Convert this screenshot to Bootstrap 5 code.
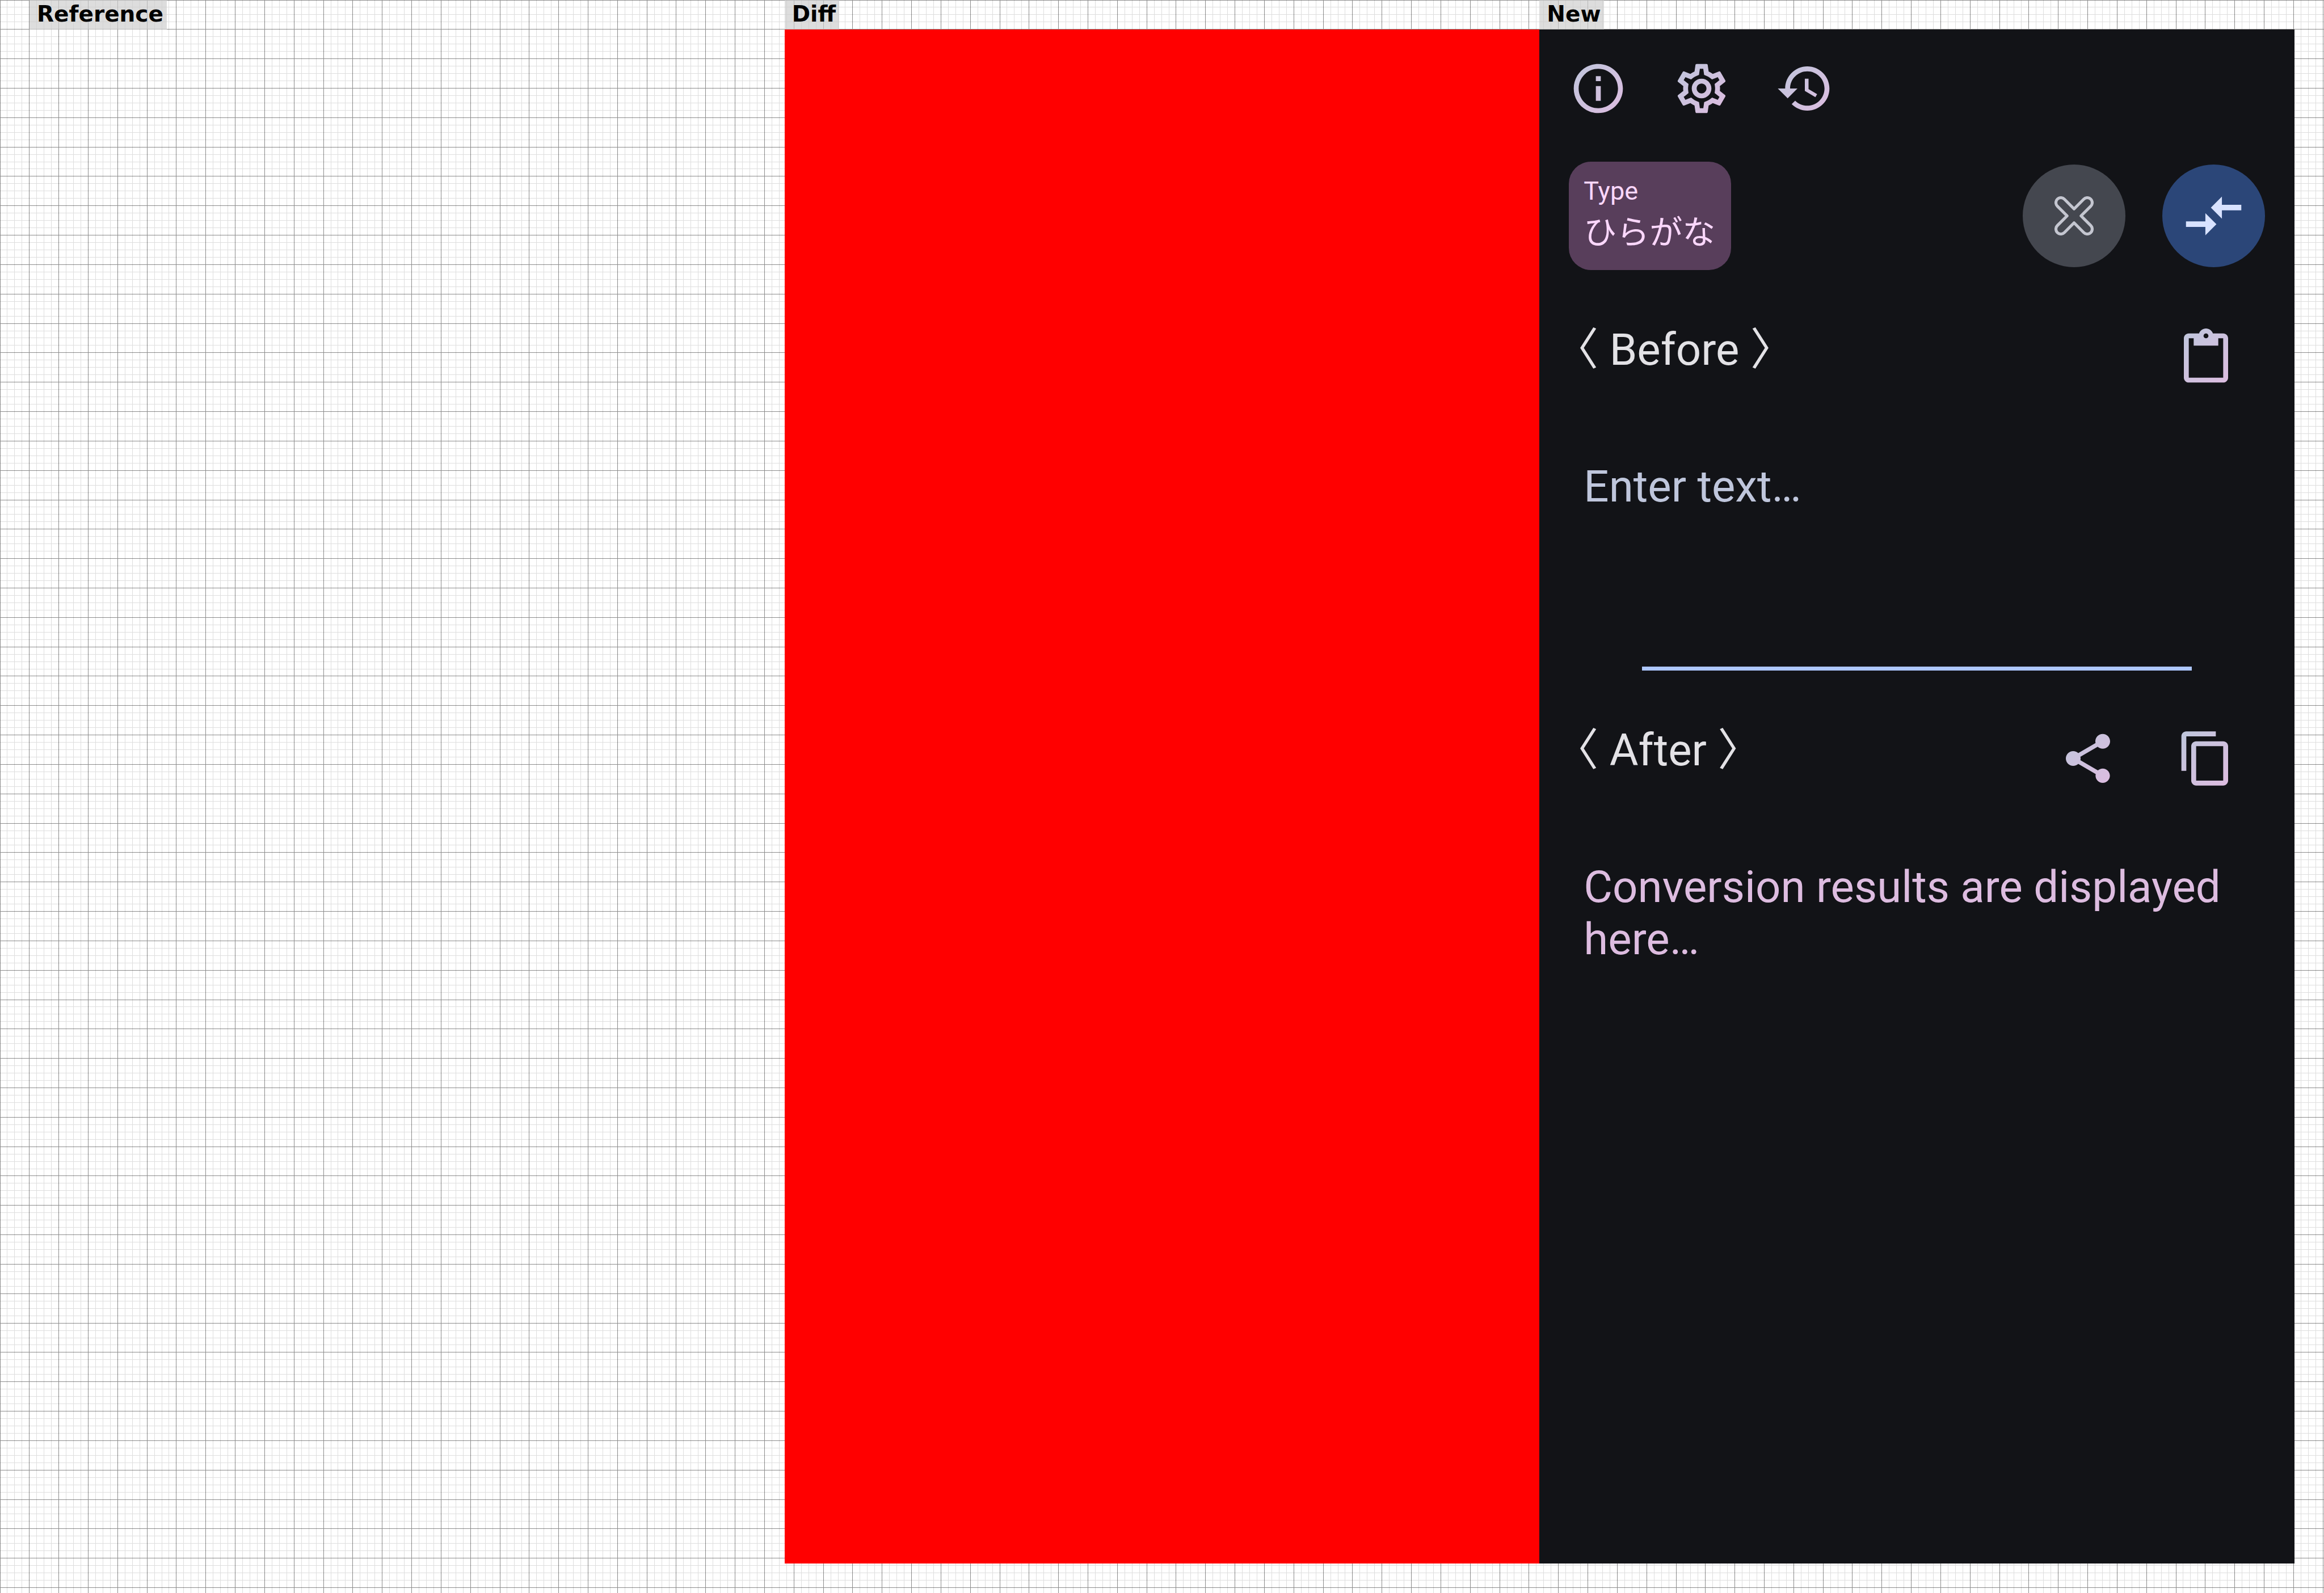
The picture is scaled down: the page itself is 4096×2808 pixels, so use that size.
<!DOCTYPE html>
<html lang="en">
<head>
<meta charset="utf-8">
<meta name="viewport" content="width=device-width, initial-scale=1">
<title>Snapshot comparison</title>
<link href="https://cdn.jsdelivr.net/npm/bootstrap@5.3.0/dist/css/bootstrap.min.css" rel="stylesheet">
<style>
  body { background: #fff; }
  .board-grid { position: absolute; inset: 0; width: 100%; height: 100%; }
  .grid-minor { stroke: rgba(0, 0, 0, .13); }
  .grid-major { stroke: rgba(0, 0, 0, .45); }
  .board { padding: 0 52px 52px; }
  .shot { flex: 1 1 0; min-width: 0; }
  .shot-label {
    background: rgba(204, 204, 204, .67); color: #000; height: 52px; padding: 0 6px 0 13px;
    font: 700 39px/50px "DejaVu Sans", sans-serif;
  }
  .diff-fill { background: #f00; }
  .app { background: #121317; color: #e3e2e6; font-family: Roboto, "Noto Sans CJK JP", sans-serif; }
  .app button { border: 0; padding: 0; background: none; display: block; }
  .toolbar-row { padding: 52px 52px 0; gap: 78px; }
  .glyph { width: 104px; height: 104px; display: block; }
  .type-row { padding: 77px 52px 0; }
  .app .type-btn {
    background: #583e5b; color: #fbd7fc; border-radius: 39px; padding: 26px;
    min-width: 286px; height: 191px; text-align: left; font-size: 45px; line-height: 52px;
  }
  .type-value { font-size: 58px; line-height: 86px; padding-top: 4px; }
  .app .round-btn { width: 181px; height: 181px; border-radius: 50%; }
  .round-gap { gap: 65px; }
  .app .clear-btn { background: #44474f; }
  .app .convert-btn { background: #2b4678; }
  .head-row { padding: 0 104px 0 26px; }
  .head-before { margin-top: 95px; }
  .head-after { margin-top: 95px; }
  .head-title { font-size: 78px; line-height: 92px; font-weight: 400; margin: 0; }
  .head-icons { padding-top: 8px; gap: 104px; }
  .text-pad { padding: 129px 78px 0; }
  .entry {
    display: block; width: 100%; height: 363px; border: 0; outline: 0; padding: 0; resize: none;
    background: transparent; color: #bfc6dc; font-size: 78px; line-height: 92px;
  }
  .entry::placeholder { color: #bfc6dc; opacity: 1; }
  .rule { height: 7px; margin: 0 181px; background: #adc6ff; }
  .result { font-size: 78px; line-height: 92px; color: #ddbce0; margin: 0; }
</style>
<script src="https://cdn.jsdelivr.net/npm/bootstrap@5.3.0/dist/js/bootstrap.bundle.min.js"></script>
</head>
<body>
<svg class="board-grid" aria-hidden="true" shape-rendering="crispEdges">
  <path class="grid-minor" id="minor" fill="none"/>
  <path class="grid-major" id="major" fill="none"/>
</svg>
<main class="board position-relative d-flex min-vh-100">
  <section class="shot d-flex flex-column align-items-start">
    <div class="shot-label">Reference</div>
  </section>
  <section class="shot d-flex flex-column align-items-start">
    <div class="shot-label">Diff</div>
    <div class="diff-fill flex-grow-1 w-100"></div>
  </section>
  <section class="shot d-flex flex-column align-items-start">
    <div class="shot-label">New</div>
    <div class="app flex-grow-1 w-100">
      <svg width="0" height="0" class="position-absolute" aria-hidden="true">
        <linearGradient id="tint" gradientUnits="userSpaceOnUse" x1="2" y1="2" x2="22" y2="22">
          <stop offset="0" stop-color="#bfc6dc"/><stop offset="1" stop-color="#ddbce0"/>
        </linearGradient>
      </svg>
      <nav class="toolbar-row d-flex">
        <button type="button" aria-label="About"><svg class="glyph" viewBox="0 0 24 24" fill="url(#tint)"><path d="M11 7h2v2h-2zM11 11h2v6h-2zM12 2C6.480 2 2 6.480 2 12s4.480 10 10 10 10-4.480 10-10S17.520 2 12 2zM12 20c-4.410 0-8-3.590-8-8s3.590-8 8-8 8 3.590 8 8-3.590 8-8 8z"/></svg></button>
        <button type="button" aria-label="Settings"><svg class="glyph" viewBox="0 0 24 24" fill="url(#tint)"><path d="M19.430 12.980c.04-.32.07-.64.07-.98 0-.34-.03-.66-.07-.98l2.110-1.650c.19-.15.24-.42.12-.64l-2-3.460c-.09-.16-.26-.25-.44-.25-.06 0-.12.01-.17.03l-2.490 1c-.52-.4-1.080-.73-1.690-.98l-.38-2.650C14.460 2.180 14.250 2 14 2h-4c-.25 0-.46.18-.49.42l-.38 2.650c-.61.25-1.170.59-1.690.98l-2.490-1c-.06-.02-.12-.03-.18-.03-.17 0-.34.09-.43.25l-2 3.460c-.13.22-.07.49.12.64l2.110 1.650c-.04.32-.07.65-.07.98s.03.66.07.98l-2.110 1.650c-.19.15-.24.42-.12.64l2 3.460c.09.16.26.25.44.25.06 0 .12-.01.17-.03l2.490-1c.52.4 1.080.73 1.690.98l.38 2.650c.03.24.24.42.49.42h4c.25 0 .46-.18.49-.42l.38-2.650c.61-.25 1.170-.59 1.690-.98l2.490 1c.06.02.12.03.18.03.17 0 .34-.09.43-.25l2-3.460c.12-.22.07-.49-.12-.64l-2.110-1.650zm-1.980-1.710c.04.31.05.52.05.73 0 .21-.02.43-.05.73l-.14 1.130.89.7 1.080.84-.7 1.210-1.270-.51-1.040-.42-.9.68c-.43.32-.84.56-1.250.73l-1.060.43-.16 1.130-.2 1.350h-1.400l-.19-1.350-.16-1.130-1.060-.43c-.43-.18-.83-.41-1.230-.71l-.91-.7-1.060.43-1.270.51-.7-1.210 1.080-.84.89-.7-.14-1.130c-.03-.31-.05-.54-.05-.74s.02-.43.05-.73l.14-1.130-.89-.7-1.080-.84.7-1.210 1.270.51 1.040.42.9-.68c.43-.32.84-.56 1.250-.73l1.060-.43.16-1.130.2-1.350h1.390l.19 1.350.16 1.130 1.060.43c.43.18.83.41 1.230.71l.91.7 1.060-.43 1.270-.51.7 1.210-1.070.85-.89.7.14 1.130zM12 8c-2.210 0-4 1.790-4 4s1.790 4 4 4 4-1.790 4-4-1.790-4-4-4zm0 6c-1.100 0-2-.9-2-2s.9-2 2-2 2 .9 2 2-.9 2-2 2z"/></svg></button>
        <button type="button" aria-label="History"><svg class="glyph" viewBox="0 0 24 24" fill="url(#tint)"><path d="M13 3c-4.970 0-9 4.030-9 9H1l3.890 3.890.07.14L9 12H6c0-3.870 3.130-7 7-7s7 3.130 7 7-3.130 7-7 7c-1.930 0-3.680-.79-4.940-2.060l-1.420 1.420C8.270 19.990 10.510 21 13 21c4.970 0 9-4.030 9-9s-4.030-9-9-9zM12 8v5l4.280 2.540.72-1.210-3.500-2.080V8H12z"/></svg></button>
      </nav>
      <div class="type-row d-flex justify-content-between align-items-center">
        <button type="button" class="type-btn"><span class="d-block">Type</span><span class="type-value d-block" lang="ja">ひらがな</span></button>
        <div class="round-gap d-flex">
          <button type="button" class="round-btn clear-btn" aria-label="Clear"><svg class="d-block mx-auto" width="69" height="69" viewBox="0 0 74 74" fill="none" stroke="#c4c6d0" stroke-width="5.500" stroke-linejoin="round"><path d="M37 23.800L55.400 5.400A9.300 9.300 0 0 1 68.600 18.600L50.200 37L68.600 55.400A9.300 9.300 0 0 1 55.400 68.600L37 50.200L18.600 68.600A9.300 9.300 0 0 1 5.400 55.400L23.800 37L5.400 18.600A9.300 9.300 0 0 1 18.600 5.400Z"/></svg></button>
          <button type="button" class="round-btn convert-btn" aria-label="Convert"><svg class="d-block mx-auto" width="117" height="117" viewBox="0 0 24 24" fill="#d8e2ff"><path d="M9.010 14H2v2h7.010v3L13 15l-3.990-4v3zM14.990 13v-3H22V8h-7.010V5L11 9l3.990 4z"/></svg></button>
        </div>
      </div>
      <div class="head-row head-before d-flex justify-content-between align-items-start">
        <h2 class="head-title"><label for="source">〈 Before 〉</label></h2>
        <div class="head-icons d-flex">
          <button type="button" aria-label="Paste"><svg class="glyph" viewBox="0 0 24 24" fill="url(#tint)"><path d="M19 2h-4.180C14.400.84 13.300 0 12 0c-1.300 0-2.400.84-2.820 2H5c-1.100 0-2 .9-2 2v16c0 1.100.9 2 2 2h14c1.100 0 2-.9 2-2V4c0-1.100-.9-2-2-2zm-7 0c.55 0 1 .45 1 1s-.45 1-1 1-1-.45-1-1 .45-1 1-1zm7 18H5V4h2v3h10V4h2v16z"/></svg></button>
        </div>
      </div>
      <div class="text-pad"><textarea class="entry" id="source" placeholder="Enter text…"></textarea></div>
      <div class="rule"></div>
      <div class="head-row head-after d-flex justify-content-between align-items-start">
        <h2 class="head-title">〈 After 〉</h2>
        <div class="head-icons d-flex">
          <button type="button" aria-label="Share"><svg class="glyph" viewBox="0 0 24 24" fill="url(#tint)"><path d="M18 16.080c-.76 0-1.440.3-1.960.77L8.910 12.700c.05-.23.09-.46.09-.7s-.04-.47-.09-.7l7.050-4.110c.54.5 1.250.81 2.040.81 1.660 0 3-1.340 3-3s-1.340-3-3-3-3 1.340-3 3c0 .24.04.47.09.7L8.040 9.810C7.500 9.310 6.790 9 6 9c-1.660 0-3 1.340-3 3s1.340 3 3 3c.79 0 1.500-.31 2.040-.81l7.120 4.160c-.05.21-.08.43-.08.65 0 1.610 1.310 2.920 2.920 2.920s2.920-1.310 2.920-2.920-1.310-2.920-2.920-2.920z"/></svg></button>
          <button type="button" aria-label="Copy"><svg class="glyph" viewBox="0 0 24 24" fill="url(#tint)"><path d="M16 1H4C2.900 1 2 1.900 2 3v14h2V3h12V1zm3 4H8C6.900 5 6 5.900 6 7v14c0 1.100.9 2 2 2h11c1.100 0 2-.9 2-2V7c0-1.100-.9-2-2-2zm0 16H8V7h11v14z"/></svg></button>
        </div>
      </div>
      <div class="text-pad"><p class="result">Conversion results are displayed here…</p></div>
    </div>
  </section>
</main>
<script>
  // Ruled paper behind the panels: about 316 fine steps across, every fourth one heavy.
  function rulePaper() {
    const w = document.documentElement.clientWidth;
    const h = Math.max(window.innerHeight, document.querySelector('.board').offsetHeight);
    const step = w * 14 / 4426;
    const d = { minor: '', major: '' };
    for (let i = 0; i * step < w; i++) {
      d[i % 4 ? 'minor' : 'major'] += `M${Math.floor(i * step) + 0.5} 0V${h}`;
    }
    for (let i = 0; i * step < h; i++) {
      d[i % 4 ? 'minor' : 'major'] += `M0 ${Math.floor(i * step) + 0.5}H${w}`;
    }
    document.getElementById('minor').setAttribute('d', d.minor);
    document.getElementById('major').setAttribute('d', d.major);
  }
  rulePaper();
  window.addEventListener('resize', rulePaper);
</script>
</body>
</html>
